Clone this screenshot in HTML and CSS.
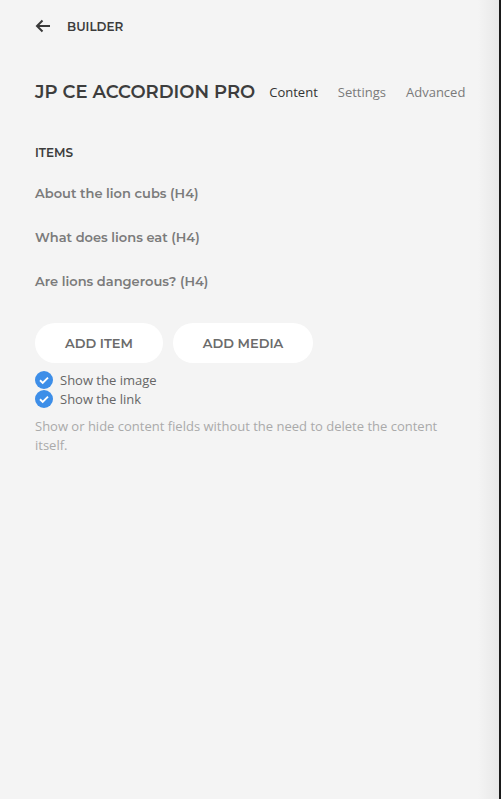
FILE: index.html
```html
<!DOCTYPE html>
<html>
<head>
<meta charset="utf-8">
<link rel="stylesheet" href="styles.css">
</head>
<body>
<div class="panel">
  <div class="topbar">
    <svg class="back" width="16" height="14" viewBox="0 0 16 14"><path d="M15 7H2M7.5 1.5L2 7l5.5 5.5" fill="none" stroke="#3a3a3a" stroke-width="2"/></svg>
    <span class="crumb">BUILDER</span>
  </div>
  <div class="header">
    <h1 class="title">JP CE ACCORDION PRO</h1>
    <nav class="tabs">
      <span class="tab active">Content</span>
      <span class="tab">Settings</span>
      <span class="tab">Advanced</span>
    </nav>
  </div>
  <div class="section-label">ITEMS</div>
  <ul class="items">
    <li>About the lion cubs (H4)</li>
    <li>What does lions eat (H4)</li>
    <li>Are lions dangerous? (H4)</li>
  </ul>
  <div class="buttons">
    <button class="btn">ADD ITEM</button>
    <button class="btn">ADD MEDIA</button>
  </div>
  <div class="checks">
    <label class="check"><span class="box"><svg width="18" height="18" viewBox="0 0 18 18"><circle cx="9" cy="9" r="9" fill="#3d8ee8"/><path d="M5 9.3l2.7 2.6 5.3-5.3" fill="none" stroke="#fff" stroke-width="1.9"/></svg></span>Show the image</label>
    <label class="check"><span class="box"><svg width="18" height="18" viewBox="0 0 18 18"><circle cx="9" cy="9" r="9" fill="#3d8ee8"/><path d="M5 9.3l2.7 2.6 5.3-5.3" fill="none" stroke="#fff" stroke-width="1.9"/></svg></span>Show the link</label>
  </div>
  <p class="help">Show or hide content fields without the need to delete the content itself.</p>
</div>
</body>
</html>
```
FILE: styles.css
```css
html, body { margin: 0; padding: 0; height: 100%; }
body { background: #1a1a1a; font-family: "Open Sans", sans-serif; }
.panel {
  box-sizing: border-box;
  width: 499px;
  height: 799px;
  background: linear-gradient(to right, #f4f4f4 0, #f4f4f4 478px, #e8e8e8 499px);
  padding: 17px 35px 0 35px;
}
.topbar { display: flex; align-items: center; height: 18px; }
.back { display: block; margin-left: 0; }
.crumb {
  margin-left: 16px;
  font-family: "Montserrat", "Inter", sans-serif;
  font-weight: 600; font-size: 12px; color: #3c3c3c;
}
.header { display: flex; align-items: center; margin-top: 47px; height: 20px; }
.title {
  margin: 0;
  font-family: "Montserrat", "Inter", sans-serif;
  font-weight: 600; font-size: 18px; color: #3d3d3d;
  white-space: nowrap;
}
.tabs { display: flex; gap: 20px; margin-left: 14px; }
.tab { font-size: 13px; color: #7a7a7a; }
.tab.active { color: #333; }
.section-label {
  margin-top: 43px;
  font-family: "Montserrat", "Inter", sans-serif; font-weight: 600; font-size: 12px; color: #3c3c3c;
}
.items { list-style: none; margin: 0; padding: 0; }
.items li {
  font-family: "Montserrat", "Inter", sans-serif; font-weight: 600; font-size: 13px; color: #7b7b7b;
  height: 44px; line-height: 44px;
}
.items li:first-child { margin-top: 11px; }
.buttons { display: flex; gap: 10px; margin-top: 20px; }
.btn {
  border: none; background: #fff; border-radius: 20px; height: 40px;
  font-family: "Montserrat", "Inter", sans-serif; font-weight: 600; font-size: 13px; color: #6b6b6b;
  padding: 0; cursor: pointer;
}
.btn:first-child { width: 128px; }
.btn:last-child { width: 140px; }
.checks { display: flex; flex-direction: column; margin-top: 7px; }
.check { display: flex; align-items: center; height: 19px; font-size: 13px; color: #666; }
.box { display: flex; width: 18px; height: 18px; margin-right: 7px; }
.help { margin: 9px 0 0 0; font-size: 13px; line-height: 19px; color: #aaa; width: 420px; }
```
